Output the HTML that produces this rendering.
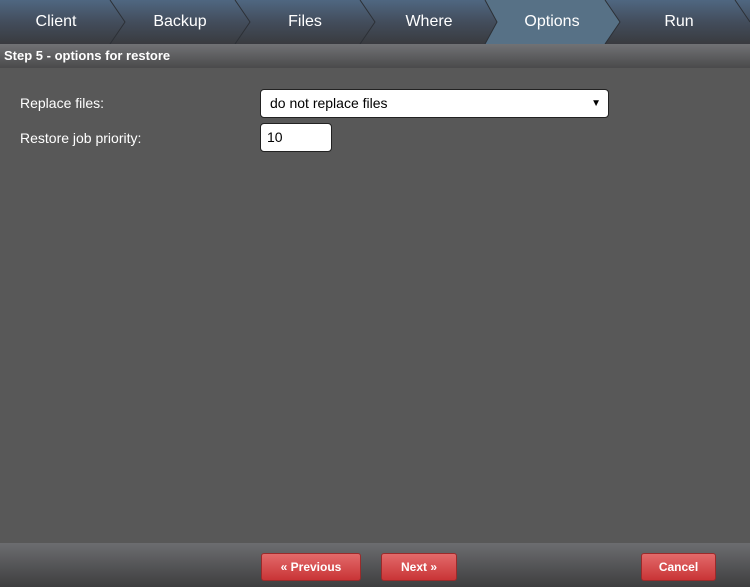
<!DOCTYPE html>
<html><head><style>
html,body{margin:0;width:750px;height:587px;overflow:hidden}
body{background:#585858;font-family:"Liberation Sans",sans-serif;position:relative}
.tabs{position:absolute;left:0;top:0;width:750px;height:44px}
.step{position:absolute;top:44px;left:0;width:750px;height:24px;background:linear-gradient(#717275,#4a4a4b);color:#fff;font-weight:bold;font-size:13px;line-height:24px;padding-left:4px;box-sizing:border-box}
.lbl{position:absolute;left:20px;color:#fff;font-size:14px}
.sel{position:absolute;left:260px;top:89px;width:349px;height:29px;background:#fff;border:1px solid #222;border-radius:4px;box-sizing:border-box;font-size:14px;line-height:27px;padding-left:9px;color:#000}
.sel span{position:absolute;right:7px;top:0;font-size:10px}
.inp{position:absolute;left:260px;top:123px;width:72px;height:29px;background:#fff;border:1px solid #222;border-radius:4px;box-sizing:border-box;font-size:14px;line-height:27px;padding-left:6px}
.foot{position:absolute;left:0;top:543px;width:750px;height:44px;background:linear-gradient(#6c6d70,#3e3e3f)}
.btn{position:absolute;top:10px;height:28px;background:linear-gradient(#e26a6a,#c93436);border:1px solid #9b2a2a;border-radius:3px;box-sizing:border-box;color:#fff;font-weight:bold;font-size:12px;line-height:26px;text-align:center}
</style></head><body>
<svg class="tabs" width="750" height="44">
<defs><linearGradient id="g" x1="0" y1="0" x2="0" y2="1"><stop offset="0" stop-color="#4f6781"/><stop offset="0.5" stop-color="#434d5c"/><stop offset="1" stop-color="#393b3f"/></linearGradient></defs>
<rect width="750" height="44" fill="url(#g)"/>
<polygon points="485,0 605,0 620,22 605,44 485,44 497,22" fill="#577186"/>
<g stroke="#2c3036" stroke-width="1" fill="none">
<polyline points="110,0 125,22 110,44"/><polyline points="235,0 250,22 235,44"/><polyline points="360,0 375,22 360,44"/><polyline points="485,0 497,22 485,44"/><polyline points="605,0 620,22 605,44"/><polyline points="735,0 750,22"/>
</g>
<g fill="#fff" font-size="16" text-anchor="middle" font-family="Liberation Sans">
<text x="56" y="26">Client</text><text x="180" y="26">Backup</text><text x="305" y="26">Files</text><text x="429" y="26">Where</text><text x="552" y="26">Options</text><text x="679" y="26">Run</text></g>
</svg>
<div class="step">Step 5 - options for restore</div>
<div class="lbl" style="top:95px">Replace files:</div>
<div class="lbl" style="top:130px">Restore job priority:</div>
<div class="sel">do not replace files<span>▼</span></div>
<div class="inp">10</div>
<div class="foot">
<div class="btn" style="left:261px;width:100px">« Previous</div>
<div class="btn" style="left:381px;width:76px">Next »</div>
<div class="btn" style="left:641px;width:75px">Cancel</div>
</div>
</body></html>
